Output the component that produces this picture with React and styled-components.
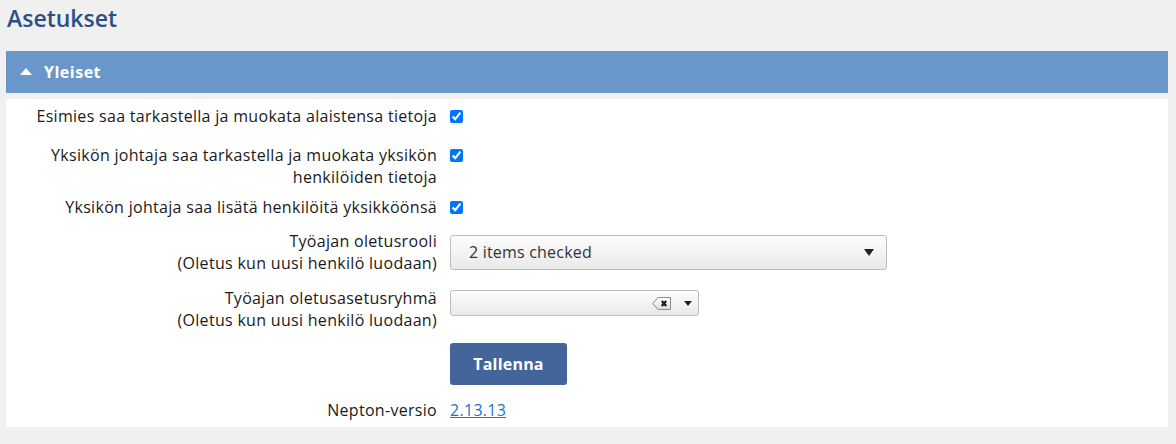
import React from 'react';
import styled, { createGlobalStyle } from 'styled-components';

const GlobalStyle = createGlobalStyle`
  html, body {
    margin: 0;
    padding: 0;
    background: #f0f0f0;
    font-family: 'Open Sans', 'Liberation Sans', sans-serif;
    color: #1a1a1a;
  }
`;

const Page = styled.div`
  padding: 0 8px 17px 6px;
`;

const Title = styled.h1`
  margin: 0;
  padding: 3px 0 0 1px;
  height: 51px;
  box-sizing: border-box;
  font-size: 23px;
  line-height: 30px;
  font-weight: 600;
  color: #2e4f85;
`;

const SectionHeader = styled.div`
  display: flex;
  align-items: center;
  gap: 12px;
  height: 42px;
  padding: 0 0 0 14px;
  background: #6a97c9;
  color: #fff;
  font-size: 16px;
  letter-spacing: 0.5px;
  font-weight: 700;
`;

const Caret = styled.span`
  width: 0;
  height: 0;
  border-left: 6px solid transparent;
  border-right: 6px solid transparent;
  border-bottom: 7px solid #fff;
  margin-top: -2px;
`;

const Panel = styled.div`
  margin-top: 6px;
  background: #fff;
  padding: 6px 0 6px;
`;

const Row = styled.div`
  display: grid;
  grid-template-columns: 431px 1fr;
  column-gap: 13px;
  align-items: ${(p) => (p.$center ? 'center' : 'start')};
  margin-bottom: ${(p) => p.$gap || 0}px;
  font-size: 16px;
  line-height: 22px;
`;

const Label = styled.div`
  text-align: right;
  color: #1a1a1a;
  letter-spacing: 0.3px;
`;

const Check = styled.input.attrs({ type: 'checkbox' })`
  display: block;
  margin: 5px 0 0;
  width: 13px;
  height: 13px;
  accent-color: #0075ff;
`;

const Select = styled.div`
  display: flex;
  align-items: center;
  box-sizing: border-box;
  width: ${(p) => p.$width}px;
  height: ${(p) => p.$height}px;
  margin-top: ${(p) => p.$top || 0}px;
  padding: 0 ${(p) => p.$right || 12}px 0 18px;
  border: 1px solid #bcbcbc;
  border-radius: 3px;
  background: linear-gradient(#fdfdfd, #e9e9e9);
  color: #333;
  font-size: 16px;
  letter-spacing: 0.2px;
`;

const SelectText = styled.span`
  flex: 1;
`;

const Arrow = styled.span`
  width: 0;
  height: 0;
  border-left: 5px solid transparent;
  border-right: 5px solid transparent;
  border-top: 7px solid #222;
`;

const SmallArrow = styled(Arrow)`
  border-left-width: 4px;
  border-right-width: 4px;
  border-top-width: 5px;
`;

const ClearIcon = styled.svg`
  display: block;
  margin-right: 13px;
`;

const Button = styled.button`
  display: block;
  width: 117px;
  height: 42px;
  border: none;
  border-radius: 3px;
  background: #44659a;
  color: #fff;
  font-family: inherit;
  font-size: 16px;
  letter-spacing: 0.2px;
  font-weight: 700;
  cursor: pointer;
`;

const Link = styled.a`
  color: #2a6fc9;
  letter-spacing: 0.3px;
  text-decoration: underline;
`;

export default function App() {
  return (
    <Page>
      <GlobalStyle />
      <Title>Asetukset</Title>
      <SectionHeader>
        <Caret />
        Yleiset
      </SectionHeader>
      <Panel>
        <Row $gap={17}>
          <Label>Esimies saa tarkastella ja muokata alaistensa tietoja</Label>
          <div><Check defaultChecked /></div>
        </Row>
        <Row $gap={8}>
          <Label>
            Yksikön johtaja saa tarkastella ja muokata yksikön
            <br />
            henkilöiden tietoja
          </Label>
          <div><Check defaultChecked /></div>
        </Row>
        <Row $gap={12}>
          <Label>Yksikön johtaja saa lisätä henkilöitä yksikköönsä</Label>
          <div><Check defaultChecked /></div>
        </Row>
        <Row $gap={13} $center>
          <Label>
            Työajan oletusrooli
            <br />
            (Oletus kun uusi henkilö luodaan)
          </Label>
          <Select $width={437} $height={35}>
            <SelectText>2 items checked</SelectText>
            <Arrow />
          </Select>
        </Row>
        <Row $gap={12}>
          <Label>
            Työajan oletusasetusryhmä
            <br />
            (Oletus kun uusi henkilö luodaan)
          </Label>
          <Select $width={249} $height={26} $top={3} $right={6}>
            <SelectText />
            <ClearIcon width="19" height="13" viewBox="0 0 19 13">
              <defs>
                <linearGradient id="clr" x1="0" y1="0" x2="0" y2="1">
                  <stop offset="0" stopColor="#ffffff" />
                  <stop offset="1" stopColor="#dcdcdc" />
                </linearGradient>
              </defs>
              <path d="M6 0.5 H18.5 V12.5 H6 L0.7 6.5 Z" fill="url(#clr)" stroke="#8c8c8c" />
              <path d="M9.8 4 L14.2 9 M14.2 4 L9.8 9" stroke="#1a1a1a" strokeWidth="2.2" />
            </ClearIcon>
            <SmallArrow />
          </Select>
        </Row>
        <Row $gap={14}>
          <span />
          <div><Button>Tallenna</Button></div>
        </Row>
        <Row>
          <Label>Nepton-versio</Label>
          <div><Link href="#">2.13.13</Link></div>
        </Row>
      </Panel>
    </Page>
  );
}
